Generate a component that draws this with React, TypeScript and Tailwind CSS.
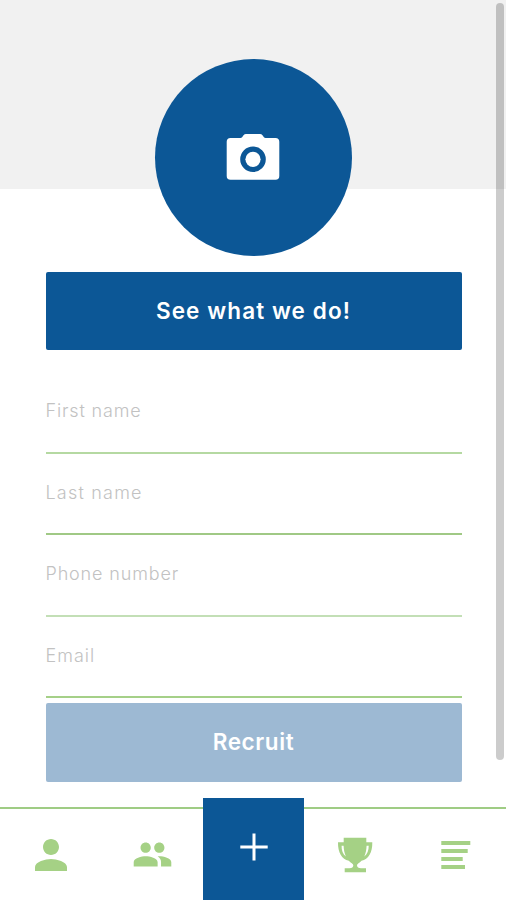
import React, { useState } from 'react';

interface Field {
  key: string;
  placeholder: string;
  line: string;
}

const FIELDS: Field[] = [
  { key: 'firstName', placeholder: 'First name', line: 'border-[#b5d9a2] tracking-[0.850px]' },
  { key: 'lastName', placeholder: 'Last name', line: 'border-[#a0c985] tracking-[1.200px]' },
  { key: 'phone', placeholder: 'Phone number', line: 'border-[#c3dfb6] tracking-[0.850px]' },
  { key: 'email', placeholder: 'Email', line: 'border-[#a5d088] tracking-[1px]' },
];

const CameraIcon = () => (
  <svg width="54" height="48" viewBox="0 0 54 48" fill="white" className="relative -top-px">
    <path
      fillRule="evenodd"
      d="M4.500 5H14.500Q16 5 17 3L17.500 2.300Q18.500 1 20 1H34Q35.500 1 36.500 2.300L37 3Q38 5 39.500 5H49.500Q53.300 5 53.300 8.800V43Q53.300 46.800 49.500 46.800H4.500Q.7 46.800 .7 43V8.800Q.7 5 4.500 5ZM27 13.500A12.800 12.800 0 1 0 27 39.100A12.800 12.800 0 1 0 27 13.500Z"
    />
    <circle cx="27" cy="26.3" r="7.6" />
  </svg>
);

const PersonIcon = () => (
  <svg width="48" height="48" viewBox="0 0 24 24" fill="currentColor">
    <path d="M12 12c2.210 0 4-1.790 4-4s-1.790-4-4-4-4 1.790-4 4 1.790 4 4 4zm0 2c-2.670 0-8 1.340-8 4v2h16v-2c0-2.660-5.330-4-8-4z" />
  </svg>
);

const PeopleIcon = () => (
  <svg width="41" height="41" viewBox="0 0 24 24" fill="currentColor">
    <path d="M16 11c1.660 0 2.990-1.340 2.990-3S17.660 5 16 5s-3 1.340-3 3 1.340 3 3 3zm-8 0c1.660 0 2.990-1.340 2.990-3S9.660 5 8 5 5 6.340 5 8s1.340 3 3 3zm0 2c-2.330 0-7 1.170-7 3.500V19h14v-2.500c0-2.330-4.670-3.500-7-3.500zm8 0c-.29 0-.62.020-.97.050 1.160.84 1.970 1.970 1.970 3.450V19h6v-2.500c0-2.330-4.670-3.500-7-3.500z" />
  </svg>
);

const TrophyIcon = () => (
  <svg width="38" height="38" viewBox="0 0 38 38" fill="currentColor">
    <path
      fillRule="evenodd"
      d="M7.700 2.700H30.300V7.300H36.300C36.500 17.500 32.500 24.300 25.500 25.800C23.500 28 21 29 21 30.300C21 32 22.500 33.300 25 33.300H30V37.300H8.700V33.300H13.500C16 33.300 17.300 32 17.300 30.300C17.300 29 14.800 28 12.800 25.800C5.800 24.300 1.800 17.500 2 7.300H7.700ZM5.600 10.800C5.400 15.500 6.900 19.300 9.900 21.600C8.500 18.500 7.700 14.500 7.600 10.800ZM32.700 10.800H30.600C30.500 14.500 29.700 18.500 28.300 21.600C31.300 19.300 32.800 15.500 32.700 10.800Z"
    />
  </svg>
);

const ListIcon = () => (
  <svg width="30" height="28" viewBox="0 0 30 28" fill="currentColor">
    <path d="M0.300 0H29.300V4H0.300ZM0.300 8H26.700V12H0.300ZM0.300 16H21.700V20H0.300ZM0.300 24H24V28H0.300Z" />
  </svg>
);

const PlusIcon = () => (
  <svg width="28" height="28" viewBox="0 0 28 28" stroke="white" strokeWidth="3">
    <path d="M14 0.500V27.500M0.300 14H27.700" />
  </svg>
);

export default function App() {
  const [values, setValues] = useState<Record<string, string>>({});

  return (
    <div className="relative flex h-[900px] w-[506px] flex-col overflow-hidden bg-white font-[Inter,sans-serif]">
      {/* Header */}
      <div className="flex h-[188.500px] shrink-0 justify-center bg-[#f1f1f1] pt-[59.400px]">
        <button className="flex h-[197px] w-[197px] shrink-0 items-center justify-center rounded-full bg-[#0c5796]">
          <CameraIcon />
        </button>
      </div>

      {/* Form */}
      <div className="flex flex-1 flex-col pt-[83.500px] pr-[44.500px] pl-[45.500px]">
        <button className="h-[78px] rounded-[2px] bg-[#0c5796] text-[22.500px] font-semibold tracking-[1.100px] text-white">
          See what we do!
        </button>

        <div className="mt-[22px]">
          {FIELDS.map((f) => (
            <input
              key={f.key}
              type="text"
              placeholder={f.placeholder}
              value={values[f.key] ?? ''}
              onChange={(e) => setValues({ ...values, [f.key]: e.target.value })}
              className={`block h-[81.600px] w-full border-b-2 pb-0.5 text-[18px] font-light outline-none placeholder:text-[#c2c2c2] ${f.line}`}
            />
          ))}
        </div>

        <button className="mt-[5px] h-[79px] rounded-[2px] bg-[#9db9d3] pb-0.5 text-[22.500px] font-semibold tracking-[0.600px] text-white">
          Recruit
        </button>
      </div>

      {/* Bottom tabs */}
      <nav className="grid h-[93px] shrink-0 grid-cols-[102px_101px_101px_101px_101px] border-t-2 border-[#9fcc84] text-[#a5d185]">
        <button className="flex items-center justify-center">
          <PersonIcon />
        </button>
        <button className="flex items-center justify-center">
          <PeopleIcon />
        </button>
        <button className="-mt-[11px] flex items-center justify-center bg-[#0c5796] pb-1">
          <PlusIcon />
        </button>
        <button className="flex items-center justify-center pb-0.5">
          <TrophyIcon />
        </button>
        <button className="flex items-center justify-center">
          <ListIcon />
        </button>
      </nav>

      {/* Scroll indicator */}
      <div className="absolute top-[3px] right-[2px] h-[757px] w-2 rounded-full bg-black/20" />
    </div>
  );
}
